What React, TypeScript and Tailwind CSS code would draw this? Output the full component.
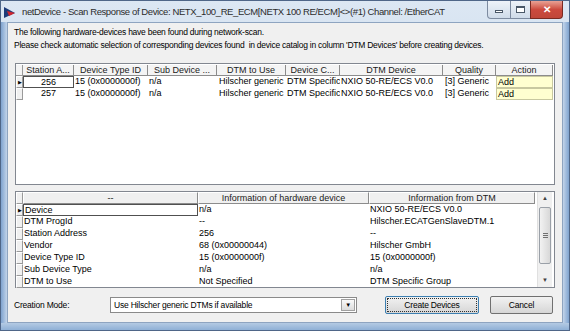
import React from "react";

const ui = { fontFamily: '"Liberation Sans", Arial, sans-serif' };
const grid = { fontFamily: '"Liberation Sans", Arial, sans-serif' };

const topCols = [
  { w: "w-[51px]", label: "Station A..." },
  { w: "w-[74px]", label: "Device Type ID" },
  { w: "w-[69px]", label: "Sub Device ..." },
  { w: "w-[69px]", label: "DTM to Use" },
  { w: "w-[54px]", label: "Device C..." },
  { w: "w-[103px]", label: "DTM Device" },
  { w: "w-[53px]", label: "Quality" },
  { w: "w-[57px]", label: "Action" },
];

const topRows = [
  { addr: "256", focus: true },
  { addr: "257", focus: false },
];

const infoRows = [
  ["Device", "n/a", "NXIO 50-RE/ECS V0.0"],
  ["DTM ProgId", "--", "Hilscher.ECATGenSlaveDTM.1"],
  ["Station Address", "256", "--"],
  ["Vendor", "68 (0x00000044)", "Hilscher GmbH"],
  ["Device Type ID", "15 (0x0000000f)", "15 (0x0000000f)"],
  ["Sub Device Type", "n/a", "n/a"],
  ["DTM to Use", "Not Specified", "DTM Specific Group"],
];

function AppIcon() {
  return (
    <svg width="13" height="13" viewBox="0 0 13 13">
      <path d="M1 1 L12 7 L1 12 Z" fill="#1d3b78" />
      <path d="M4 5 L12 7 L6 10 Z" fill="#d0262f" />
    </svg>
  );
}

function CaptionButtons() {
  return (
    <div className="flex h-[18px] self-start">
      <div className="w-[24px] h-full border border-[#7d8ba0] border-t-0 rounded-bl-[4px] bg-gradient-to-b from-[#eef3f9] to-[#cfdbe9] flex items-center justify-center">
        <div className="w-[8px] h-[3px] border border-[#4a5868] bg-white mt-[4px]" />
      </div>
      <div className="w-[19px] h-full border-b border-[#7d8ba0] bg-gradient-to-b from-[#eef3f9] to-[#cfdbe9] flex items-center justify-center">
        <div className="w-[9px] h-[7px] border border-[#4a5868] border-t-2 bg-white" />
      </div>
      <div className="w-[33px] h-full border border-[#7a2a22] border-t-0 rounded-br-[4px] bg-gradient-to-b from-[#e8a195] via-[#cc4a3e] to-[#c0473a] flex items-center justify-center">
        <span className="text-white text-[10px] font-bold leading-none" style={grid}>
          ✕
        </span>
      </div>
    </div>
  );
}

function RowHead({ marker, h }: { marker?: boolean; h: string }) {
  return (
    <div className={`w-[7px] ${h} shrink-0 bg-[#f0f0f0] border-t border-l border-white border-r border-b border-r-[#9a9a9a] border-b-[#9a9a9a] flex items-center justify-center`}>
      {marker && <span className="text-[5px] leading-none text-black">▶</span>}
    </div>
  );
}

function TopGrid() {
  return (
    <div className="mx-[7px] h-[122px] bg-white border border-[#828790] pt-[1px]" style={grid}>
      {/*--- header ---*/}
      <div className="flex h-[11px] text-[9px] leading-[10px] text-[#1a1a1a]">
        <div className="w-[7px] bg-[#f4f4f4] border-r border-b border-[#9a9a9a]" />
        {topCols.map((c) => (
          <div key={c.label} className={`${c.w} shrink-0 bg-[#f4f4f4] border-r border-b border-[#8c8c8c] text-center overflow-hidden whitespace-nowrap`}>
            {c.label}
          </div>
        ))}
      </div>
      {/*--- rows ---*/}
      {topRows.map((r) => (
        <div key={r.addr} className="flex h-[12px] text-[9px] leading-[11px] text-black whitespace-nowrap">
          <RowHead marker={r.focus} h="h-[12px]" />
          <div className={`w-[51px] shrink-0 text-center ${r.focus ? "border border-[#505050]" : ""}`}>{r.addr}</div>
          <div className="w-[74px] shrink-0 pl-[1px] overflow-hidden">15 (0x0000000f)</div>
          <div className="w-[69px] shrink-0 pl-[1px] overflow-hidden">n/a</div>
          <div className="w-[69px] shrink-0 pl-[2px] overflow-hidden">Hilscher generic</div>
          <div className="w-[54px] shrink-0 pl-[1px] overflow-hidden">DTM Specific</div>
          <div className="w-[103px] shrink-0 pl-[1px] overflow-hidden">NXIO 50-RE/ECS V0.0</div>
          <div className="w-[53px] shrink-0 pl-[2px] overflow-hidden">[3] Generic</div>
          <div className="w-[57px] shrink-0 pl-[1px] bg-[#ffffd0] border border-[#c8c8a0] overflow-hidden">Add</div>
        </div>
      ))}
    </div>
  );
}

function ScrollBar() {
  return (
    <div className="w-[15px] shrink-0 h-full flex flex-col bg-[#f0f0f0] border-l border-[#e0e0e0]">
      <div className="h-[13px] flex items-center justify-center text-[6px] text-[#404040]">▲</div>
      <div className="mx-[1px] h-[57px] mt-[2px] rounded-[2px] border border-[#9aa0a8] bg-gradient-to-r from-[#f2f2f2] to-[#d8d8d8] flex items-center justify-center">
        <div className="flex flex-col gap-[1px]">
          <div className="w-[5px] h-px bg-[#707070]" />
          <div className="w-[5px] h-px bg-[#707070]" />
          <div className="w-[5px] h-px bg-[#707070]" />
        </div>
      </div>
      <div className="flex-1" />
      <div className="h-[13px] flex items-center justify-center text-[6px] text-[#404040]">▼</div>
    </div>
  );
}

function InfoGrid() {
  return (
    <div className="mx-[7px] h-[97px] bg-white border border-[#828790] flex" style={grid}>
      <div className="flex-1 flex flex-col">
        {/*--- header ---*/}
        <div className="flex h-[12px] text-[9px] leading-[10px] text-[#1a1a1a]">
          <RowHead h="h-[12px]" />
          {[
            { w: "w-[175px]", t: "--" },
            { w: "w-[171px]", t: "Information of hardware device" },
            { w: "w-[166px]", t: "Information from DTM" },
          ].map((c) => (
            <div key={c.t} className={`${c.w} shrink-0 bg-[#f0f0f0] border-t border-l border-white border-r border-b border-r-[#8c8c8c] border-b-[#8c8c8c] text-center whitespace-nowrap`}>
              {c.t}
            </div>
          ))}
        </div>
        {/*--- rows ---*/}
        {infoRows.map((r, i) => (
          <div key={r[0]} className="flex h-[12px] text-[9px] leading-[11px] text-black whitespace-nowrap">
            <RowHead marker={i === 0} h="h-[12px]" />
            <div className={`w-[175px] shrink-0 pl-[1px] ${i === 0 ? "border border-[#505050]" : ""}`}>{r[0]}</div>
            <div className="w-[171px] shrink-0 pl-[1px]">{r[1]}</div>
            <div className="w-[166px] shrink-0 pl-[1px]">{r[2]}</div>
          </div>
        ))}
      </div>
      <div className="pr-[2px] h-full">
        <ScrollBar />
      </div>
    </div>
  );
}

export default function App() {
  return (
    <div className="w-[570px] h-[331px] flex flex-col bg-gradient-to-b from-[#dce7f3] via-[#c4d6ea] to-[#a9c2e0] border border-[#4f6688] overflow-hidden">
      {/*--- title bar ---*/}
      <div className="h-[21px] shrink-0 flex items-start pl-[2px] pr-[6px]">
        <div className="mt-[4px] flex items-center gap-[6px] flex-1">
          <AppIcon />
          <span className="text-[9.5px] text-[#2c2c2c] whitespace-nowrap tracking-[-0.4px]" style={ui}>
            netDevice - Scan Response of Device: NETX_100_RE_ECM[NETX 100 RE/ECM]&lt;&gt;(#1) Channel: /EtherCAT
          </span>
        </div>
        <CaptionButtons />
      </div>

      {/*--- body with blue side frames ---*/}
      <div className="flex-1 flex">
        <div className="w-[6px] shrink-0 bg-gradient-to-r from-[#7fa3cf] to-[#c2d4ea]" />
        <div className="flex-1 h-[301px] bg-[#f0f0f0] border border-[#8ea4c0] flex flex-col">
          {/*--- message ---*/}
          <div className="pt-[3px] px-[6px] text-[8.5px] leading-[13px] tracking-[-0.25px] text-black" style={ui}>
            <p>The following hardware-devices have been found during network-scan.</p>
            <p>Please check automatic selection of corresponding devices found&nbsp; in device catalog in column 'DTM Devices' before creating devices.</p>
          </div>

          <div className="mt-[11px]">
            <TopGrid />
          </div>

          <div className="mt-[6px]">
            <InfoGrid />
          </div>

          {/*--- creation mode ---*/}
          <div className="mt-[8px] pl-[6px] flex items-center h-[18px] text-[8.5px] tracking-[-0.2px]" style={ui}>
            <div className="w-[96px] shrink-0 text-black">Creation Mode:</div>
            <div className="w-[247px] h-[16px] shrink-0 bg-white border border-[#8a8a8a] flex items-center">
              <span className="flex-1 pl-[3px] text-black whitespace-nowrap">Use Hilscher generic DTMs if available</span>
              <div className="w-[14px] h-[12px] mr-[1px] border border-[#a0a0a0] bg-gradient-to-b from-[#fafafa] to-[#dcdcdc] flex items-center justify-center text-[6px] text-black">
                ▼
              </div>
            </div>
            <button className="ml-[28px] w-[94px] h-[18px] shrink-0 border border-[#3c7fb1] rounded-[2px] bg-gradient-to-b from-[#f2f2f2] to-[#d6d6d6] p-[1px]">
              <div className="w-full h-full border border-dotted border-[#303030] flex items-center justify-center text-black">Create Devices</div>
            </button>
            <button className="ml-[11px] w-[63px] h-[18px] shrink-0 border border-[#707070] rounded-[2px] bg-gradient-to-b from-[#f2f2f2] to-[#d6d6d6] flex items-center justify-center text-black">
              Cancel
            </button>
          </div>
        </div>
        <div className="w-[6px] shrink-0 bg-gradient-to-l from-[#7fa3cf] to-[#c2d4ea]" />
      </div>
      <div className="h-[7px] shrink-0 bg-gradient-to-b from-[#b4cae3] to-[#8fb0d6]" />
    </div>
  );
}
